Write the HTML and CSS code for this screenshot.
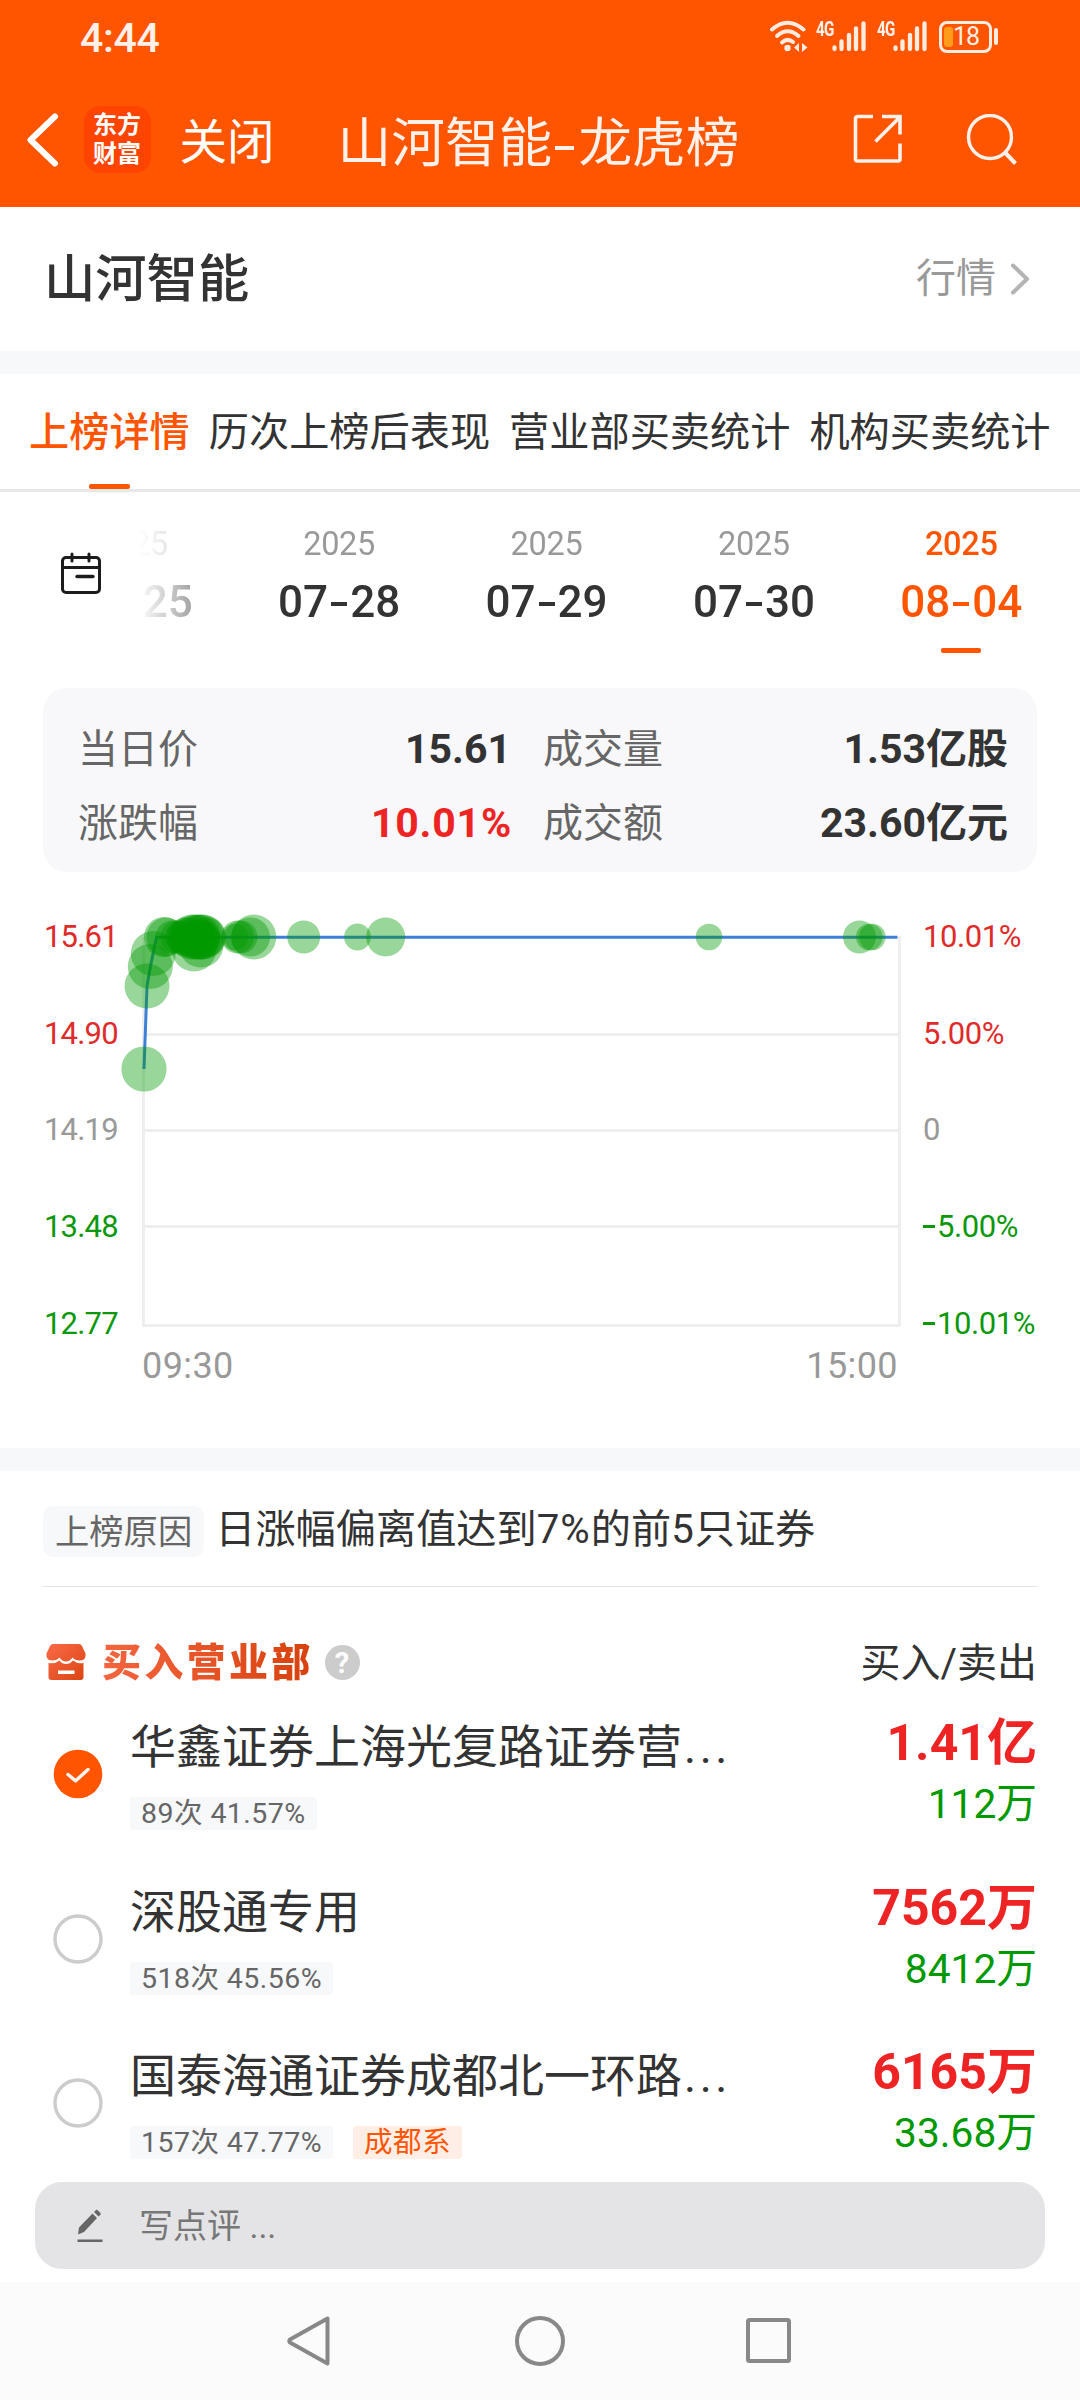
FILE: index.html
```html
<!DOCTYPE html>
<html lang="zh-CN">
<head>
<meta charset="utf-8">
<title>山河智能-龙虎榜</title>
<link rel="stylesheet" href="styles.css">
</head>
<body>
<header class="top">
  <div class="status">
    <span class="clock">4:44</span>
    <div class="status-icons">
      <svg class="wifi" width="40" height="34" viewBox="0 0 40 34" fill="none" stroke="#ffece1" stroke-width="4" stroke-linecap="round">
        <path d="M3 10.5Q18.500-3 34.500 10.500"/><path d="M8 17Q18.500 7.500 29.500 17"/><path d="M13 23.500Q18.500 18.500 24 23"/>
        <circle cx="18.500" cy="29" r="3.200" fill="#ffece1" stroke="none"/>
        <path d="M30 24v9l-5-4.500zM33 24v9l5.500-4.500z" fill="#ffece1" stroke="none"/>
      </svg>
      <div class="signal"><span class="net">4G</span>
        <svg width="34" height="34" viewBox="0 0 34 34" stroke="#ffece1" stroke-width="4.300" stroke-linecap="round"><path d="M2.500 28.500v1.500M9.500 22.500v7.500M17 16v14M24 9.500v20.500M31.500 4.500v25.500"/></svg>
      </div>
      <div class="signal second"><span class="net">4G</span>
        <svg width="34" height="34" viewBox="0 0 34 34" stroke="#ffece1" stroke-width="4.300" stroke-linecap="round"><path d="M2.500 28.500v1.500M9.500 22.500v7.500M17 16v14M24 9.500v20.500M31.500 4.500v25.500"/></svg>
      </div>
      <div class="battery"><i class="charge"></i><span>18</span></div>
      <i class="battery-cap"></i>
    </div>
  </div>
  <div class="titlebar">
    <svg class="back" width="34" height="56" viewBox="0 0 34 56" fill="none" stroke="#fff" stroke-width="6" stroke-linecap="round" stroke-linejoin="round"><path d="M29 4.500L4.500 28L29 51.500"/></svg>
    <div class="logo"><span>东方</span><span>财富</span></div>
    <span class="close">关闭</span>
    <h1><span>山河智能</span><i class="dash"></i><span>龙虎榜</span></h1>
    <svg class="share" width="50" height="50" viewBox="0 0 50 50" fill="none" stroke="#fff1ea" stroke-width="3.600"><path d="M20 2.500H4.500a2 2 0 0 0-2 2V45a2 2 0 0 0 2 2H45a2 2 0 0 0 2-2V29.500M29 2.500H47V20.500M22.500 27.500L47 3"/></svg>
    <svg class="search" width="52" height="52" viewBox="0 0 52 52" fill="none" stroke="#fff1ea" stroke-width="3.400"><circle cx="24" cy="23" r="21.500"/><path d="M38.500 38L49.500 49.500" stroke-width="4"/></svg>
  </div>
</header>

<section class="stock">
  <h2>山河智能</h2>
  <a class="quote">行情<svg width="20" height="34" viewBox="0 0 20 34" fill="none" stroke="#b3b3b3" stroke-width="4" stroke-linecap="round" stroke-linejoin="round"><path d="M3 3.500L17 17L3 30.500"/></svg></a>
</section>

<nav class="tabs">
  <span class="tab on">上榜详情</span><span class="tab">历次上榜后表现</span><span class="tab">营业部买卖统计</span><span class="tab">机构买卖统计</span>
</nav>

<section class="dates">
  <svg class="cal" width="42" height="44" viewBox="0 0 42 44" fill="none" stroke="#1c1c1c" stroke-width="3" stroke-linecap="round"><rect x="2.500" y="6.500" width="37" height="35" rx="3.500"/><path d="M2.500 16.500h37M12 3v7M29 3v7"/><path d="M17 25.500h16" stroke-width="3.400"/></svg>
  <div class="strip">
    <div class="day"><span>2025</span><b>07<i></i>25</b></div>
    <div class="day"><span>2025</span><b>07<i></i>28</b></div>
    <div class="day"><span>2025</span><b>07<i></i>29</b></div>
    <div class="day"><span>2025</span><b>07<i></i>30</b></div>
    <div class="day on"><span>2025</span><b>08<i></i>04</b></div>
  </div>
</section>

<section class="summary">
  <span>当日价</span><b class="inset">15.61</b><span class="next">成交量</span><b>1.53亿股</b>
  <span>涨跌幅</span><b class="up">10.01%</b><span class="next">成交额</span><b>23.60亿元</b>
</section>

<section class="chart">
  <div class="axis prices"><span class="up">15.61</span><span class="up">14.90</span><span>14.19</span><span class="down">13.48</span><span class="down">12.77</span></div>
  <div class="plot">
    <svg width="759" height="392" viewBox="142 936 759 392">
      <g stroke="#eee" stroke-width="3"><path d="M142 1034.500H900M142 1130.500H900M142 1226.500H900M142 1325.500H900"/><path d="M143.500 937V1327M899.500 936V1326"/></g>
      <path d="M144 1069L147 986L150.500 966L156.500 937.200H897.500" fill="none" stroke="#3d80d6" stroke-width="3"/>
      <g class="trades">
        <circle cx="144" cy="1069" r="22.600"/><circle cx="147" cy="986" r="22.500"/><circle cx="150.300" cy="966.500" r="22.500"/><circle cx="153.300" cy="953.500" r="22.500"/>
        <circle cx="164" cy="937" r="20"/><circle cx="166" cy="937" r="19.500"/><circle cx="172" cy="937" r="16.500"/><circle cx="177" cy="937" r="16.500"/><circle cx="182" cy="937" r="16.500"/><circle cx="186" cy="937" r="19.500"/><circle cx="189" cy="937" r="19.500"/>
        <circle cx="192" cy="937" r="22.500"/><circle cx="194" cy="949" r="22.500"/><circle cx="195" cy="937" r="22.500"/><circle cx="198" cy="937" r="22.500"/><circle cx="201" cy="937" r="22.500"/><circle cx="201" cy="945" r="22.500"/><circle cx="200" cy="940" r="19.500"/><circle cx="203" cy="937" r="22.500"/><circle cx="206" cy="937" r="20"/><circle cx="203" cy="937" r="17"/>
        <circle cx="237.500" cy="937" r="16.500"/><circle cx="241" cy="937" r="16.500"/><circle cx="235" cy="937" r="13.300"/><circle cx="250.500" cy="937" r="19.500"/><circle cx="253.800" cy="937" r="22.500"/>
        <circle cx="303.700" cy="937" r="16.500"/><circle cx="357.500" cy="937" r="13.400"/><circle cx="385.700" cy="937" r="19.500"/>
        <circle cx="709" cy="937" r="13.300"/><circle cx="859.500" cy="937" r="16.500"/><circle cx="869.300" cy="937" r="13.300"/><circle cx="872.300" cy="937" r="13.300"/>
      </g>
    </svg>
    <div class="hours"><span>09:30</span><span>15:00</span></div>
  </div>
  <div class="axis rates"><span class="up">10.01%</span><span class="up">5.00%</span><span>0</span><span class="down"><i></i>5.00%</span><span class="down"><i></i>10.01%</span></div>
</section>

<section class="list">
  <div class="reason"><span class="why">上榜原因</span><span class="cause">日涨幅偏离值达到<em>7%</em>的前<em>5</em>只证券</span></div>
  <div class="listhead">
    <svg width="40" height="38" viewBox="0 0 40 38"><defs><linearGradient id="g" x1="0" y1="0" x2="1" y2="1"><stop offset="0" stop-color="#f96a47"/><stop offset="1" stop-color="#dc4512"/></linearGradient></defs>
      <path fill="url(#g)" d="M7 1H33Q35 1 36 3L39.500 10.500V13Q39 17.500 33.500 17.500Q29 17.500 26.500 14.500Q23.500 18.500 20 18.500Q16 18.500 13.500 14.500Q11 17.500 6.500 17.500Q1 17.500.5 13V10.500L4 3Q5 1 7 1ZM2.500 20Q9.500 21 13.500 17.500Q16 21 20 21Q24 21 27 17.500Q31 21 37.500 20V34Q37.500 37 34.500 37H5.500Q2.500 37 2.500 34ZM12 27.500V31H28.500V27.500Z" fill-rule="evenodd"/></svg>
    <h3>买入营业部</h3><i class="help">?</i><span class="cols">买入/卖出</span>
  </div>
  <article class="row">
    <svg class="radio" width="50" height="50" viewBox="0 0 50 50"><circle cx="25" cy="25" r="24.300" fill="#f50"/><path d="M15 25.500L22.700 31.800L35 20.500" fill="none" stroke="#fff4ee" stroke-width="3.500" stroke-linecap="round" stroke-linejoin="round"/></svg>
    <div class="seat"><div class="name">华鑫证券上海光复路证券营<span class="dots">...</span></div><div class="tags"><span>89次 41.57%</span></div></div>
    <div class="sums"><b>1.41亿</b><span>112万</span></div>
  </article>
  <article class="row">
    <svg class="radio" width="50" height="50" viewBox="0 0 50 50"><circle cx="25" cy="25" r="23" fill="none" stroke="#ccc" stroke-width="3.400"/></svg>
    <div class="seat"><div class="name">深股通专用</div><div class="tags"><span>518次 45.56%</span></div></div>
    <div class="sums"><b>7562万</b><span>8412万</span></div>
  </article>
  <article class="row">
    <svg class="radio" width="50" height="50" viewBox="0 0 50 50"><circle cx="25" cy="25" r="23" fill="none" stroke="#ccc" stroke-width="3.400"/></svg>
    <div class="seat"><div class="name">国泰海通证券成都北一环路<span class="dots">...</span></div><div class="tags"><span>157次 47.77%</span><span class="hot">成都系</span></div></div>
    <div class="sums"><b>6165万</b><span>33.68万</span></div>
  </article>
</section>

<div class="comment">
  <svg width="28" height="34" viewBox="0 0 28 34" fill="#666"><path d="M1.500 30.500H26.500V33H1.500ZM2 25.500L3 18.500L16.500 4.500L21 9L8 23ZM18 3L20 1Q21 .5 22 1.500L24.500 4Q25 5 24.500 5.700L22.500 7.500Z"/></svg>
  <span>写点评 ...</span>
</div>

<footer class="keys">
  <svg width="46" height="54" viewBox="0 0 46 54"><path d="M41.500 4.500V49.500L4 28.500Q2.500 27 4 25.500Z"/></svg>
  <svg width="50" height="54" viewBox="0 0 50 54"><circle cx="25" cy="27" r="23"/></svg>
  <svg width="48" height="54" viewBox="0 0 48 54"><rect x="3" y="6" width="41" height="41" rx="1.500"/></svg>
</footer>
</body>
</html>
```
FILE: styles.css
```css
* { box-sizing: border-box; margin: 0; padding: 0; }
body { width: 1080px; height: 2400px; overflow: hidden; background: #fff; color: #333; font-family: Roboto, "Noto Sans CJK SC", sans-serif; font-size: 40px; display: flex; flex-direction: column; }
svg { display: block; flex: none; }
h1, h2, h3, i, em { font-style: normal; font-weight: 400; }
span, b, h1, h2, h3 { white-space: nowrap; }
.up { color: #e02b2b; }
.down { color: #0b980b; }

.top { height: 207px; background: #f50; color: #fff1ea; flex: none; }
.status { height: 76px; display: flex; justify-content: space-between; padding: 0 82px 0 80px; }
.clock { font-size: 41px; line-height: 77px; font-weight: 500; letter-spacing: -.3px; }
.status-icons { display: flex; align-items: flex-start; padding-top: 19px; }
.wifi { margin-right: 7px; }
.signal { display: flex; width: 49px; }
.signal.second { margin-left: 12px; }
.net { width: 16px; font-size: 20px; line-height: 18px; font-weight: 700; letter-spacing: -1px; padding-top: 1px; transform: scaleX(.76); transform-origin: left; }
.signal .net { flex: none; }
.battery { width: 53px; height: 32px; margin: 2px 2px 0 13px; border: 3px solid #ffece1; border-radius: 8px; display: flex; align-items: center; padding-left: 2px; font-size: 25px; line-height: 26px; letter-spacing: -1px; }
.charge { width: 9px; height: 20px; border-radius: 3px; background: #ff9d1a; margin-right: 0; }
.battery-cap { width: 4px; height: 17px; border-radius: 2px; margin-top: 9px; background: #ffece1; }
.titlebar { height: 131px; display: flex; align-items: flex-start; padding-left: 26px; }
.back { margin-top: 36px; }
.logo { width: 67px; height: 67px; margin: 30px 0 0 23.500px; border-radius: 16px; background: #ff4400; color: #fff; display: flex; flex-direction: column; align-items: center; padding-top: 5px; font-size: 24px; font-weight: 700; line-height: 29px; }
.close { width: 96px; margin: 30px 0 0 29px; font-size: 47.500px; line-height: 74px; color: #fff; }
.titlebar h1 { width: 402px; margin: 31px 0 0 62px; display: flex; align-items: center; font-size: 53.700px; line-height: 74px; }
.dash { width: 20px; height: 4px; background: #fff1ea; margin: 8px 4px 0 3px; }
.share { margin: 38px 0 0 113px; }
.search { margin: 38px 0 0 63px; }

.stock { height: 167px; flex: none; border-bottom: 23px solid #f7f8fa; display: flex; justify-content: space-between; padding: 0 50px 0 44px; line-height: 146px; }
.stock h2 { font-size: 51.300px; font-weight: 500; }
.quote { display: flex; align-items: center; gap: 14px; color: #999; }

.tabs { height: 118px; flex: none; border-bottom: 3px solid #e8e8e8; display: flex; gap: 19px; padding-left: 29px; line-height: 118px; font-size: 40.200px; }
.tab { height: 115px; }
.tab.on { color: #f50; font-weight: 500; display: flex; flex-direction: column; align-items: center; }
.tab.on::after { content: ""; width: 41px; height: 5px; border-radius: 2px; background: #f50; margin-top: -8px; flex: none; }

.dates { height: 196px; flex: none; display: flex; }
.cal { margin: 59px 0 0 60px; }
.strip { width: 942px; margin-left: 36px; display: flex; justify-content: flex-end; overflow: hidden; padding-right: 15px; -webkit-mask-image: linear-gradient(90deg, transparent, #000 120px); mask-image: linear-gradient(90deg, transparent, #000 120px); }
.day { flex: 0 0 207.400px; display: flex; flex-direction: column; align-items: center; padding-top: 32px; }
.day span { font-size: 32.500px; line-height: 40px; color: #999; letter-spacing: -.3px; }
.day b { font-size: 44px; line-height: 56px; margin-top: 10px; font-weight: 500; display: flex; align-items: center; }
.day b i { width: 16px; height: 4px; margin: 4px 3px 0; background: currentColor; }
.day.on span, .day.on b { color: #f50; font-weight: 500; }
.day.on::after { content: ""; width: 40px; height: 5px; border-radius: 2px; margin-top: 18px; background: #f50; }

.summary { margin: 0 43px; height: 184px; flex: none; background: #f8f8fa; border-radius: 24px; display: grid; grid-template-columns: 140px 294px 173px 1fr; grid-template-rows: 74px 74px; padding: 24px 29px 0 35px; line-height: 75px; color: #666; }
.summary b { text-align: right; font-size: 41px; color: #333; }
.summary b.up { color: #ee2424; letter-spacing: .8px; }
.summary .inset { padding-right: 1px; }
.next { padding-left: 31px; }

.chart { height: 599px; flex: none; border-bottom: 23px solid #f7f8fa; padding-top: 64px; display: flex; }
.axis { height: 388px; margin-top: -19px; display: flex; flex-direction: column; gap: 56.700px; font-size: 31px; line-height: 40px; color: #999; letter-spacing: -.8px; }
.prices { width: 98px; margin-left: 44px; }
.rates { margin-left: 22px; letter-spacing: -.4px; }
.rates i { display: inline-block; width: 12px; height: 3px; margin-right: 2px; background: currentColor; vertical-align: 9px; }
.plot { width: 759px; }
.plot svg { overflow: visible; }
.trades { fill: #090; fill-opacity: .4; }
.hours { display: flex; justify-content: space-between; padding: 16px 3px 0 0; font-size: 36px; line-height: 44px; color: #999; letter-spacing: .4px; }

.list { height: 711px; flex: none; padding: 0 43px; }
.reason { height: 116px; border-bottom: 1px solid #e3e3e3; display: flex; align-items: flex-start; padding-top: 35px; line-height: 46px; }
.reason em { letter-spacing: 1px; }
.cause { font-size: 40.200px; line-height: 48px; }
.why { height: 51px; margin-right: 11px; padding: 0 12px; border-radius: 10px; background: #f7f8fa; color: #666; font-size: 34.300px; line-height: 53px; }
.listhead { height: 121px; padding: 56px 0 0 3px; display: flex; align-items: flex-start; }
.listhead h3 { margin: -3px 0 0 16px; font-size: 39px; font-weight: 900; line-height: 46px; letter-spacing: 3.300px; background: linear-gradient(90deg, #f4653f, #d8410c); -webkit-background-clip: text; background-clip: text; color: transparent; }
.help { width: 35px; height: 35px; margin: 2px 0 0 11px; border-radius: 50%; background: #ccc; color: #fff; font-weight: 700; font-size: 29px; line-height: 36px; text-align: center; }
.cols { margin-left: auto; line-height: 42px; }
.row { height: 164.500px; display: flex; }
.radio { margin: 41px 0 0 10px; }
.seat { margin-left: 27px; flex: 1; }
.name { font-size: 46px; line-height: 60px; margin-top: 9px; white-space: nowrap; }
.dots { letter-spacing: 3.500px; margin-left: 2px; }
.tags { display: flex; gap: 20px; margin-top: 20px; }
.tags span { height: 33px; padding: 0 11px; border-radius: 3px; background: #f7f8fa; color: #666; font-size: 28.500px; line-height: 34px; letter-spacing: .45px; }
.tags .hot { background: #ffeee6; color: #f50; }
.sums { display: flex; flex-direction: column; align-items: flex-end; }
.sums b { font-size: 50px; line-height: 60px; margin-top: 5px; color: #ee2424; }
.sums span { font-size: 40.700px; line-height: 50px; margin-top: 6px; color: #090; }

.comment { height: 87px; flex: none; margin: 0 35px; border-radius: 27px; background: #e4e4e6; color: #777; font-size: 34px; line-height: 86px; display: flex; align-items: center; gap: 35px; padding-left: 41px; }

.keys { height: 118px; flex: none; margin-top: 13px; background: #fbfbfb; display: flex; padding: 32px 0 0 286px; }
.keys svg { fill: none; stroke: #888; stroke-width: 4; stroke-linejoin: round; }
.keys svg:nth-child(2) { margin-left: 183px; }
.keys svg:nth-child(3) { margin-left: 180px; }
```
